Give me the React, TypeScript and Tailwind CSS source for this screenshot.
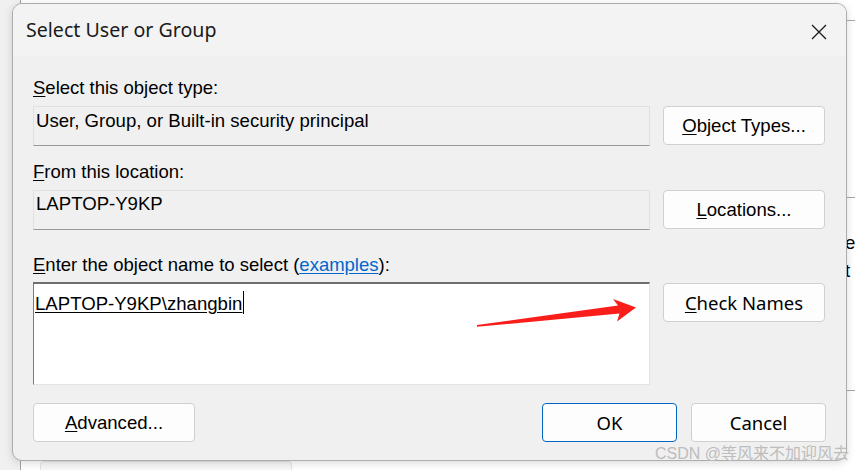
import React from "react";

const ui = { fontFamily: '"Liberation Sans", Arial, sans-serif' };
const segoe = { fontFamily: '"Noto Sans", "Open Sans", sans-serif' };

function Btn({
  children,
  className = "",
  font = ui,
}: {
  children: React.ReactNode;
  className?: string;
  font?: React.CSSProperties;
}) {
  return (
    <div
      className={
        "flex items-center justify-center rounded-[4px] bg-[#fdfdfd] text-[18.6px] text-black " +
        className
      }
      style={font}
    >
      {children}
    </div>
  );
}

export default function App() {
  return (
    <div className="relative h-[470px] w-[855px] overflow-hidden bg-white">
      {/* background window behind the dialog */}
      <div className="absolute left-0 top-0 h-[470px] w-[21px] border-r border-[#a3a3a3] bg-[#f0f0f0]" />
      <div className="absolute left-[40px] top-[461px] h-[20px] w-[252px] rounded-[4px] border border-[#e3e3e3] bg-[#f7f7f7]" />
      <div className="absolute left-[846px] top-[20px] h-px w-[10px] bg-[#a8a8a8]" />
      <div className="absolute left-[846px] top-[197px] h-px w-[10px] bg-[#a8a8a8]" />
      <div className="absolute left-[846px] top-[390px] h-px w-[10px] bg-[#a8a8a8]" />
      <div
        className="absolute left-[845px] top-[233px] text-[18.6px] leading-[20px] text-black"
        style={ui}
      >
        e
      </div>
      <div
        className="absolute left-[845px] top-[261px] text-[18.6px] leading-[20px] text-black"
        style={ui}
      >
        t
      </div>

      {/* dialog */}
      <div className="absolute left-[12px] top-[3px] flex h-[458px] w-[835px] flex-col overflow-hidden rounded-[10px] border border-[#adadad] bg-[#f0f0f0] shadow-[0_2px_8px_rgba(0,0,0,0.15)]">
        {/* title bar */}
        <div className="flex h-[52px] shrink-0 items-center justify-between bg-[#f3f3f3] pl-[13px] pr-[19px]">
          <span className="text-[19.6px] text-[#1a1a1a]" style={segoe}>
            Select User or Group
          </span>
          <svg width="16" height="16" viewBox="0 0 16 16" className="mt-[3px]">
            <path d="M1 1 L15 15 M15 1 L1 15" stroke="#1a1a1a" strokeWidth="1.3" fill="none" />
          </svg>
        </div>

        {/* body */}
        <div className="flex flex-col px-[20px]" style={ui}>
          <div className="mt-[22px] h-[20px] text-[18.5px] leading-[20px] text-black">
            <span className="underline underline-offset-2">S</span>elect this object type:
          </div>
          <div className="mt-[8px] flex gap-[13px]">
            <div className="h-[40px] w-[617px] border border-[#e1e1e1] border-b-[#9a9a9a] bg-[#f0f0f0] pl-[2px] pt-[3px] text-[18.6px] leading-[22px] text-black">
              User, Group, or Built-in security principal
            </div>
            <Btn className="h-[39px] w-[162px] border border-[#d0d0d0]">
              <span>
                <span className="underline underline-offset-2">O</span>bject Types...
              </span>
            </Btn>
          </div>

          <div className="mt-[16px] h-[20px] text-[18.5px] leading-[20px] text-black">
            <span className="underline underline-offset-2">F</span>rom this location:
          </div>
          <div className="mt-[8px] flex gap-[13px]">
            <div className="h-[40px] w-[617px] border border-[#e1e1e1] border-b-[#9a9a9a] bg-[#f0f0f0] pl-[2px] pt-[2px] text-[18.6px] leading-[22px] text-black">
              LAPTOP-Y9KP
            </div>
            <Btn className="h-[39px] w-[162px] border border-[#d0d0d0]">
              <span>
                <span className="underline underline-offset-2">L</span>ocations...
              </span>
            </Btn>
          </div>

          <div className="mt-[25px] h-[20px] text-[18.5px] leading-[20px] text-black">
            <span className="underline underline-offset-2">E</span>nter the object name to select (
            <span className="text-[#0066cc] underline underline-offset-2">examples</span>):
          </div>
          <div className="mt-[7px] flex items-start gap-[13px]">
            <div className="relative h-[103px] w-[617px] border-[1px] border-l-[#7a7a7a] border-t-[#6f6f6f] border-t-2 border-r-[#e3e3e3] border-b-[#e3e3e3] bg-white pl-[1px] pt-[3px] text-[18.6px] leading-[22px] text-black">
              <span className="underline underline-offset-2">LAPTOP-Y9KP\zhangbin</span>
              <span className="ml-[1px] inline-block h-[23px] w-px translate-y-[4px] bg-black align-baseline" />
            </div>
            <Btn className="mt-[1px] h-[39px] w-[162px] border border-[#d0d0d0]" font={segoe}>
              <span className="text-[18.5px]">
                <span className="underline underline-offset-2">C</span>heck Names
              </span>
            </Btn>
          </div>

          <div className="mt-[18px] flex items-center">
            <Btn className="h-[39px] w-[162px] border border-[#d0d0d0]">
              <span>
                <span className="underline underline-offset-2">A</span>dvanced...
              </span>
            </Btn>
            <div className="flex-1" />
            <Btn className="h-[39px] w-[135px] border border-[#0067c0]" font={segoe}>
              <span className="text-[18.5px]">OK</span>
            </Btn>
            <Btn className="ml-[14px] h-[39px] w-[135px] border border-[#d0d0d0]" font={segoe}>
              <span className="text-[18.5px]">Cancel</span>
            </Btn>
          </div>
        </div>
      </div>

      {/* red annotation arrow */}
      <svg className="pointer-events-none absolute left-0 top-0" width="855" height="470">
        <polygon
          points="477,325 618,305.5 613,299 636,307.5 617,321.5 619.5,313.5 477,326.8"
          fill="#fa1e1a"
        />
      </svg>

      {/* watermark */}
      <div
        className="pointer-events-none absolute left-[655px] top-[444px] whitespace-nowrap text-[16px] leading-[20px] text-[#bdbdbd]"
        style={{ fontFamily: '"Liberation Sans", "Noto Sans CJK SC", sans-serif' }}
      >
        CSDN @等风来不加迎风去
      </div>
    </div>
  );
}
